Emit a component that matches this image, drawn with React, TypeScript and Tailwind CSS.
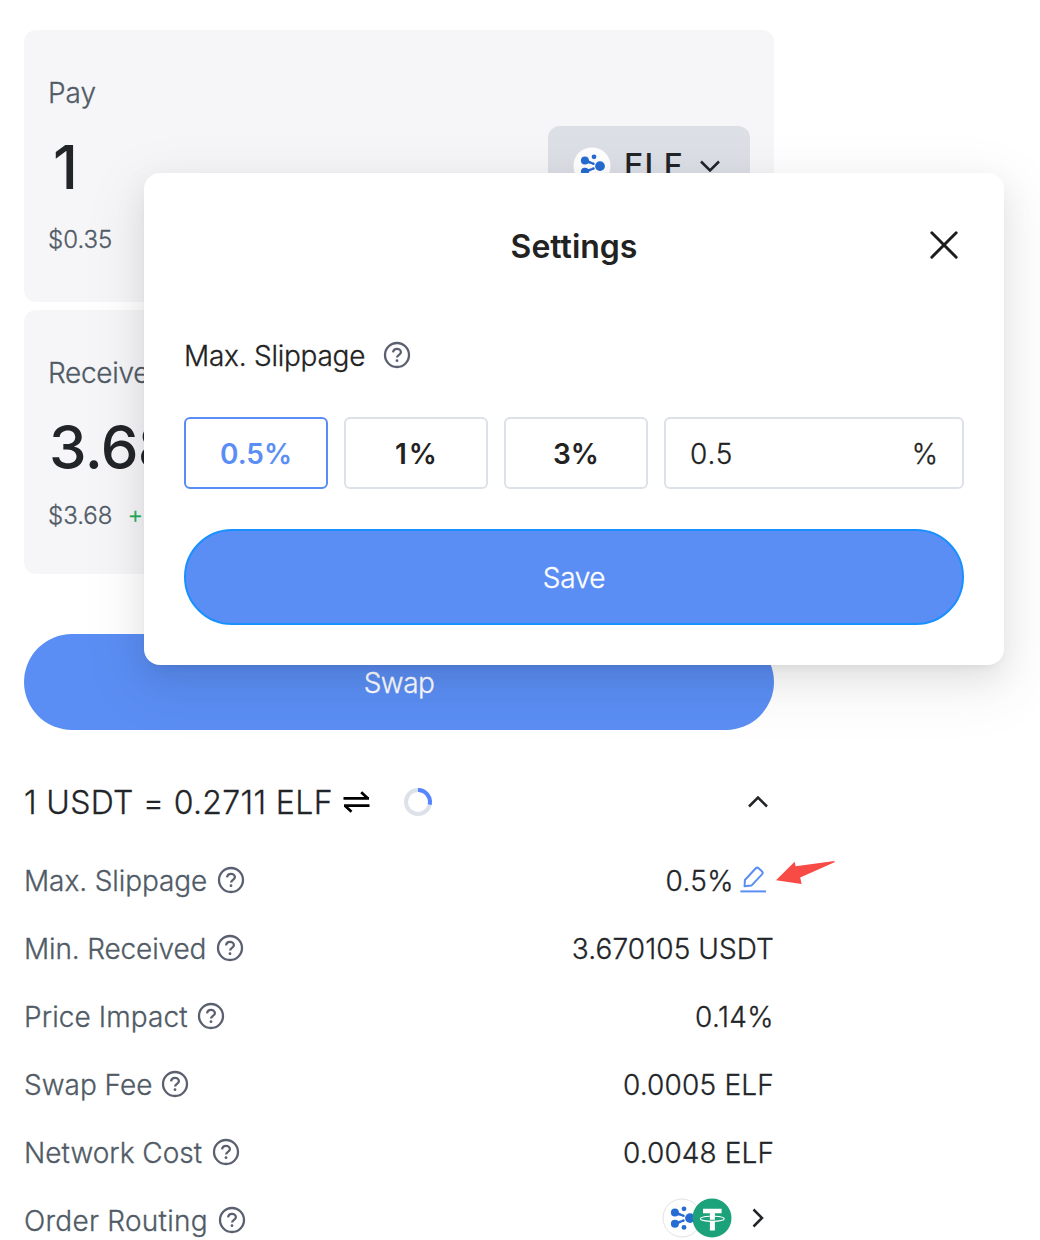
import type { ReactNode } from "react";

function HelpIcon({ className = "" }: { className?: string }) {
  return (
    <svg className={"h-7 w-7 shrink-0 " + className} viewBox="0 0 28 28" fill="none" stroke="#5b6070" strokeWidth="2.3">
      <circle cx="14" cy="14" r="12" />
      <path d="M10.1 11.4c.1-2.2 1.7-3.6 3.9-3.6s3.9 1.4 3.9 3.4c0 2.6-3.8 2.7-3.8 5.2" />
      <circle cx="14" cy="19.7" r="1.4" fill="#5b6070" stroke="none" />
    </svg>
  );
}

/** aelf token mark: five satellites linked to a hub. */
function ElfLogo() {
  return (
    <svg className="h-10 w-10 shrink-0" viewBox="0 0 40 40">
      <circle cx="20" cy="20" r="19" fill="#fff" stroke="#dfe1e5" strokeWidth="1" />
      <g fill="#266cd3">
        <circle cx="12.9" cy="14.6" r="4" />
        <circle cx="12.9" cy="25.7" r="4" />
        <circle cx="22" cy="10.8" r="2.4" />
        <circle cx="22" cy="29.4" r="2.4" />
        <circle cx="28" cy="20.1" r="4.9" />
        <circle cx="21.4" cy="17.7" r="1.3" />
        <circle cx="21.4" cy="22.6" r="1.3" />
        <path d="M15.3 13.8l6.3 3-.5 1.7-6.5-1.6zM15.3 26.5l6.3-3-.5-1.7-6.5 1.6z" />
      </g>
    </svg>
  );
}

function UsdtLogo() {
  return (
    <svg className="h-10 w-10 shrink-0" viewBox="0 0 40 40">
      <circle cx="20" cy="20" r="19.5" fill="#1ba27a" />
      <path d="M11 10.8h18.6v4.4h-6.7v17.4h-5V15.2H11z" fill="#fff" />
      <path
        d="M17.8 18.3c-5.2.2-9.4 1.100-9.400 2.500 0 1.500 5.300 2.600 11.900 2.600s11.900-1.100 11.900-2.600c0-1.400-4.200-2.300-9.400-2.500"
        fill="none"
        stroke="#fff"
        strokeWidth="1.1"
      />
      <path d="M17.9 22.200c1.600.1 3.400.1 5 0" fill="none" stroke="#1ba27a" strokeWidth=".9" />
    </svg>
  );
}

function EditIcon() {
  return (
    <svg className="h-7 w-7 shrink-0" viewBox="0 0 28 28" fill="none" stroke="#5b8ef4" strokeWidth="2" strokeLinejoin="round">
      <path d="M4.6 20.3l.3-6.3L15.6 2.500c1-1 2.300-1 3.300-.1l3 2.800c1 1 1 2.200.1 3.200L11.400 19.600z" />
      <path d="M.4 25.400h25.600" />
    </svg>
  );
}

const rows: { label: string; fit: string; gap: string; value: ReactNode }[] = [
  {
    label: "Max. Slippage",
    fit: "tracking-[-0.1px]",
    gap: "ml-2.5",
    value: (
      <>
        <span className="pt-0.5 tracking-[0.4px]">0.5%</span>
        <span className="mr-1.5 ml-1.5">
          <EditIcon />
        </span>
      </>
    ),
  },
  { label: "Min. Received", fit: "tracking-[-0.15px]", gap: "ml-2.5", value: <span className="pt-0.5 tracking-[0.1px]">3.670105 USDT</span> },
  { label: "Price Impact", fit: "tracking-[0.1px]", gap: "ml-[9px]", value: <span className="pt-0.5 tracking-[0.4px]">0.14%</span> },
  { label: "Swap Fee", fit: "", gap: "ml-[9px]", value: <span className="pt-0.5 tracking-[0.2px]">0.0005 ELF</span> },
  { label: "Network Cost", fit: "", gap: "ml-2.5", value: <span className="pt-0.5 tracking-[0.1px]">0.0048 ELF</span> },
  {
    label: "Order Routing",
    fit: "tracking-[0.25px]",
    gap: "ml-2.5",
    value: (
      <div className="flex items-center pb-1">
        <ElfLogo />
        <span className="-ml-2.5">
          <UsdtLogo />
        </span>
        <svg className="mr-2.5 ml-5 h-5 w-3" viewBox="0 0 12 20" fill="none" stroke="#222528" strokeWidth="2.5">
          <path d="M1.5 1.5L10 10l-8.5 8.5" />
        </svg>
      </div>
    ),
  },
];

function SwapPanel() {
  return (
    <main className="ml-6 w-[750px]">
      <section className="flex h-[272px] justify-between rounded-xl bg-[#f6f6f9] px-6">
        <div>
          <div className="mt-[47px] h-8 text-[28px] leading-8 text-[#515b66]">Pay</div>
          <div className="mt-[19px] h-[78px] pl-[5px] text-[60px] leading-[78px] font-medium text-[#222528] [-webkit-text-stroke:0]">1</div>
          <div className="mt-[18px] text-2xl leading-8 text-[#515b66]">$0.35</div>
        </div>
        <div className="mt-24 flex h-20 w-[202px] items-center rounded-xl bg-[#dcdfe6] pl-6">
          <ElfLogo />
          <span className="ml-3 text-[32px] font-medium tracking-[1.2px] text-[#222528] [-webkit-text-stroke:0]">ELF</span>
          <svg className="ml-4 h-3 w-5" viewBox="0 0 20 12" fill="none" stroke="#222528" strokeWidth="2.5">
            <path d="M1 1.5l9 9 9-9" />
          </svg>
        </div>
      </section>

      <section className="mt-2 h-[264px] rounded-xl bg-[#f6f6f9] px-6 pt-[47px]">
        <div className="h-8 text-[28px] leading-8 tracking-[-0.3px] text-[#515b66]">Receive</div>
        <div className="mt-[19px] h-[78px] pl-px text-[60px] leading-[78px] font-medium tracking-[-0.6px] text-[#222528] [-webkit-text-stroke:0]">3.68</div>
        <div className="mt-3.5 flex text-2xl leading-8 text-[#515b66]">
          $3.68<span className="ml-[15px] pt-px text-[#1fae5b]">+1.2%</span>
        </div>
      </section>

      <button className="mt-[60px] flex h-24 w-full items-center justify-center rounded-full bg-[#5b8ef4] pt-0.5 text-[28px] tracking-[-0.5px] text-white">
        Swap
      </button>

      <div className="mt-7 flex h-[88px] items-center text-[32px] text-[#222528]">
        <span className="pt-px tracking-[0.35px]">1 USDT = 0.2711 ELF</span>
        <svg className="ml-2.5 h-6 w-[27px]" viewBox="0 0 27 24" fill="none" stroke="#000" strokeWidth="2.7">
          <path d="M.5 8.300h25.500M18.200 2.200l6.500 6.100M26.500 15.700H1M8.500 21.800L2 15.700" />
        </svg>
        <svg className="ml-[34px] h-7 w-7" viewBox="0 0 28 28" fill="none" strokeWidth="4">
          <circle cx="14" cy="14" r="12" stroke="#dde1e9" />
          <path d="M14 2a12 12 0 0 1 11.7 14.6" stroke="#5585ff" />
        </svg>
        <svg className="mr-1.5 ml-auto h-3 w-5" viewBox="0 0 20 12" fill="none" stroke="#222528" strokeWidth="2.5">
          <path d="M1 10.5l9-9 9 9" />
        </svg>
      </div>

      {rows.map((row) => (
        <div key={row.label} className="flex h-[68px] items-center justify-between text-[28px]">
          <div className="flex items-center text-[#515b66]">
            <span className={"pt-0.5 " + row.fit}>{row.label}</span>
            <HelpIcon className={row.gap} />
          </div>
          <div className="flex items-center text-[#222528]">{row.value}</div>
        </div>
      ))}
    </main>
  );
}

function SettingsDialog() {
  const option =
    "flex h-[72px] w-36 items-center justify-center rounded-md border-2 pt-0.5 font-semibold [-webkit-text-stroke:0]";
  return (
    <div
      role="dialog"
      className="absolute top-[173px] left-36 h-[492px] w-[860px] rounded-2xl bg-white px-10 text-[28px] text-[#222] shadow-[0_12px_32px_0_rgba(0,0,0,0.08),0_6px_12px_-8px_rgba(0,0,0,0.12),0_18px_56px_16px_rgba(0,0,0,0.05)]"
    >
      <header className="relative flex h-[146px] items-center justify-center pt-0.5 text-[32px] font-semibold [-webkit-text-stroke:0]">
        Settings
        <svg className="absolute top-[58px] right-1.5 h-7 w-7" viewBox="0 0 28 28" fill="none" stroke="#1c1c1c" strokeWidth="2.9" strokeLinecap="round">
          <path d="M1.8 1.8l24.4 24.4M26.2 1.8L1.8 26.2" />
        </svg>
      </header>
      <div className="flex h-[72px] items-center">
        <span className="pt-0.5 tracking-[-0.25px]">Max. Slippage</span>
        <HelpIcon className="ml-[18px]" />
      </div>
      <div className="mt-[26px] flex gap-4">
        <button className={option + " border-[#5b8ef4] text-[#5b8ef4]"}>0.5%</button>
        <button className={option + " border-[#dde1e8] pl-0.5 tracking-[2px]"}>1%</button>
        <button className={option + " border-[#dde1e8]"}>3%</button>
        <div className="flex h-[72px] w-[300px] items-center justify-between rounded-md border-2 border-[#dde1e8] px-6 pt-0.5">
          <span className="tracking-[0.8px]">0.5</span>
          <span>%</span>
        </div>
      </div>
      <button className="mt-10 flex h-24 w-full items-center justify-center rounded-full border-2 border-[#1890ff] bg-[#5b8ef4] pt-0.5 tracking-[-0.4px] text-white">
        Save
      </button>
    </div>
  );
}

export default function App() {
  return (
    <div className="relative h-[1240px] w-[1040px] overflow-hidden bg-white pt-[30px] font-['Inter',sans-serif] font-light [-webkit-text-stroke:0.3px]">
      <SwapPanel />
      <SettingsDialog />
      <svg className="absolute top-[860px] left-[776px] h-6 w-[60px]" viewBox="0 0 60 24">
        <path d="M0 20.2L18.6 1.8l1 4.5L58.5 1v1.2L24.2 17.5l1.4 6.4z" fill="#f94b46" />
      </svg>
    </div>
  );
}
